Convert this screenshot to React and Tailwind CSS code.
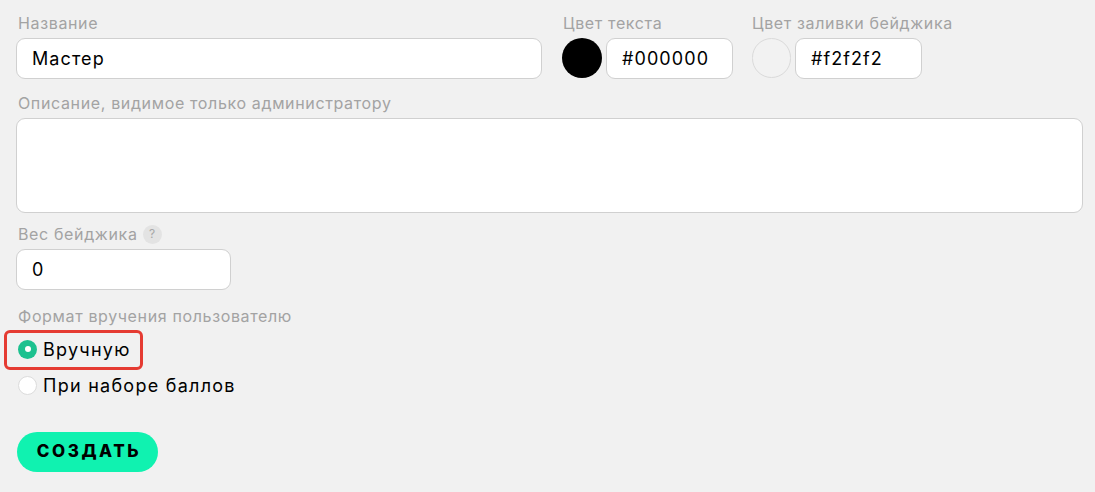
const font = { fontFamily: 'Inter, "Noto Sans", sans-serif' }

function Label({ children }) {
  return <div className="text-[16px] leading-5 tracking-[0.04em] text-[#a3a3a3] mb-[5px]">{children}</div>
}

function Field({ value, className = '' }) {
  return (
    <div className={`h-[41px] bg-white border border-[#d0d0d0] rounded-[9px] flex items-center px-[15px] text-[18px] tracking-[0.06em] text-black ${className}`}>
      {value}
    </div>
  )
}

function Radio({ checked, label }) {
  return (
    <div className="flex items-center gap-[6px] h-[18px]">
      {checked ? (
        <span className="w-[19px] h-[19px] rounded-full bg-[#1cc18f] flex items-center justify-center">
          <span className="w-[6px] h-[6px] rounded-full bg-white" />
        </span>
      ) : (
        <span className="w-[19px] h-[19px] rounded-full bg-white border border-[#dcdcdc]" />
      )}
      <span className="text-[18px] tracking-[0.07em] text-black">{label}</span>
    </div>
  )
}

export default function App() {
  return (
    <div style={font} className="w-[1095px] h-[492px] bg-[#f1f1f1] pl-4 pr-3 pt-[13px]">
      <div className="flex">
        <div className="w-[526px]">
          <Label><span className="pl-[2px]">Название</span></Label>
          <Field value="Мастер" />
        </div>
        <div className="ml-[20px]">
          <Label><span className="pl-[1px]">Цвет текста</span></Label>
          <div className="flex gap-[4px]">
            <span className="w-[40px] h-[40px] rounded-full bg-black" />
            <Field value="#000000" className="w-[127px]" />
          </div>
        </div>
        <div className="ml-[19px]">
          <Label>Цвет заливки бейджика</Label>
          <div className="flex gap-[4px]">
            <span className="w-[39px] h-[40px] rounded-full bg-[#f2f2f2] border border-[#dadada]" />
            <Field value="#f2f2f2" className="w-[127px]" />
          </div>
        </div>
      </div>

      <div className="mt-[14px]">
        <Label><span className="pl-[2px]">Описание, видимое только администратору</span></Label>
        <div className="h-[95px] bg-white border border-[#d0d0d0] rounded-[9px]" />
      </div>

      <div className="mt-[11px]">
        <div className="flex items-center gap-[5px] mb-[5px]">
          <span className="pl-[2px] text-[16px] leading-5 tracking-[0.04em] text-[#a3a3a3]">Вес бейджика</span>
          <span className="w-[19px] h-[19px] rounded-full bg-[#e3e3e3] text-[#a8a8a8] text-[12px] flex items-center justify-center">?</span>
        </div>
        <Field value="0" className="w-[215px]" />
      </div>

      <div className="mt-[16px]">
        <Label><span className="pl-[2px]">Формат вручения пользователю</span></Label>
        <div className="relative mt-[14px] pl-[2px]">
          <div className="absolute left-[-12px] top-[-10px] w-[139px] h-[40px] border-[3px] border-[#e53b32] rounded-[6px]" />
          <Radio checked label="Вручную" />
        </div>
        <div className="mt-[18px] pl-[2px]">
          <Radio label="При наборе баллов" />
        </div>
      </div>

      <button className="mt-[38px] ml-[1px] h-[40px] w-[141px] pl-[3px] rounded-full bg-[#10f2b0] text-[17px] font-extrabold tracking-[0.15em] text-black">
        СОЗДАТЬ
      </button>
    </div>
  )
}
